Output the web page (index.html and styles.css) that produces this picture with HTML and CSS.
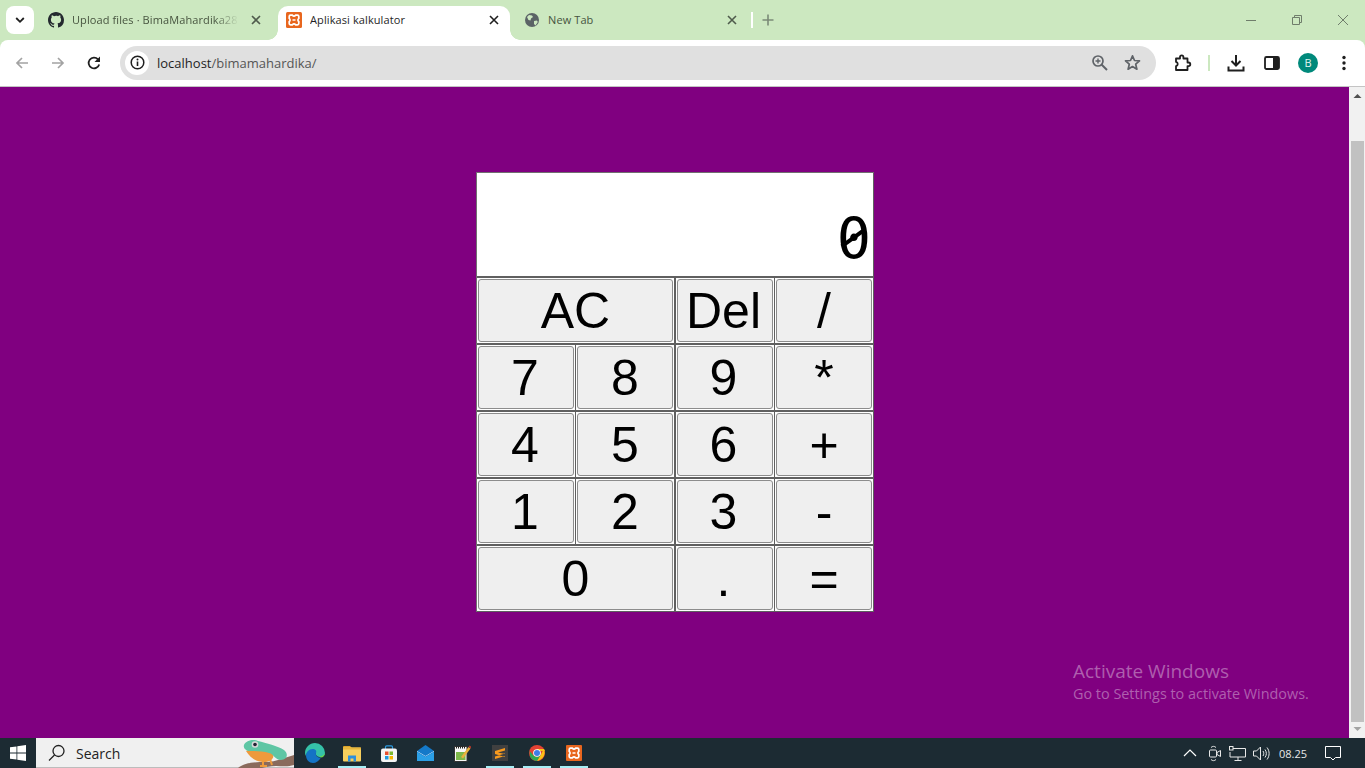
FILE: index.html
```html
<!DOCTYPE html>
<html lang="id">
<head>
<meta charset="utf-8">
<title>Aplikasi kalkulator</title>
<link rel="stylesheet" href="styles.css">
</head>
<body>
<div class="browser">
  <header class="tabstrip">
    <button class="tab-search"><svg width="12" height="12" viewBox="0 0 12 12"><path d="M2.2 4l3.8 3.8L9.8 4" fill="none" stroke="#1f1f1f" stroke-width="1.8"/></svg></button>
    <div class="tab tab-one">
      <svg class="fav" width="16" height="16" viewBox="0 0 16 16"><path fill="#24292f" d="M8 0C3.58 0 0 3.58 0 8c0 3.54 2.29 6.53 5.47 7.59.4.07.55-.17.55-.38v-1.34c-2.23.48-2.7-1.07-2.7-1.07-.36-.93-.89-1.17-.89-1.17-.73-.5.05-.49.05-.49.8.06 1.23.82 1.23.82.71 1.22 1.87.87 2.33.66.07-.52.28-.87.51-1.07-1.78-.2-3.64-.89-3.64-3.95 0-.87.31-1.59.82-2.15-.08-.2-.36-1.02.08-2.12 0 0 .67-.21 2.2.82A7.7 7.7 0 0 1 8 3.87c.68 0 1.36.09 2 .27 1.53-1.04 2.2-.82 2.2-.82.44 1.1.16 1.92.08 2.12.51.56.82 1.27.82 2.15 0 3.07-1.87 3.75-3.65 3.95.29.25.54.73.54 1.48v2.2c0 .21.15.46.55.38A8 8 0 0 0 16 8c0-4.42-3.58-8-8-8z"/></svg>
      <span class="tab-title fade">Upload files · BimaMahardika28</span>
      <svg class="x" width="10" height="10" viewBox="0 0 10 10"><path d="M1 1l8 8M9 1l-8 8" stroke="#4f5b4c" stroke-width="1.6"/></svg>
    </div>
    <div class="tab tab-active">
      <svg class="fav" width="16" height="16" viewBox="0 0 16 16"><rect width="16" height="16" rx="1.5" fill="#e8661e"/><path d="M4.500 3.200H6.300Q8 5 9.700 3.200H11.500Q12.800 3.200 12.800 4.500V6.300Q11 8 12.800 9.700V11.500Q12.800 12.800 11.500 12.800H9.700Q8 11 6.300 12.800H4.500Q3.200 12.800 3.200 11.500V9.700Q5 8 3.200 6.300V4.500Q3.200 3.200 4.500 3.200zM6.500 8h3" fill="none" stroke="#fff" stroke-width="1.700"/></svg>
      <span class="tab-title">Aplikasi kalkulator</span>
      <svg class="x" width="10" height="10" viewBox="0 0 10 10"><path d="M1 1l8 8M9 1l-8 8" stroke="#1f1f1f" stroke-width="1.6"/></svg>
    </div>
    <div class="tab tab-three">
      <svg class="fav" width="14" height="14" viewBox="0 0 14 14"><circle cx="7" cy="7" r="7" fill="#5b6366"/><path d="M2 4l2-2 3 .5 1 1.500-2 1.500-.5 2L3.500 7zM9 8l3 -.5.8 1.500L10.500 12.500 9 11z" fill="#cce8c0"/></svg>
      <span class="tab-title">New Tab</span>
      <svg class="x" width="10" height="10" viewBox="0 0 10 10"><path d="M1 1l8 8M9 1l-8 8" stroke="#4f5b4c" stroke-width="1.6"/></svg>
    </div>
    <span class="tab-sep"></span>
    <svg class="newtab" width="12" height="12" viewBox="0 0 12 12"><path d="M6 .5v11M.5 6h11" stroke="#7b8a77" stroke-width="1.6"/></svg>
    <div class="window-controls">
      <svg width="12" height="12" viewBox="0 0 12 12"><path d="M1 6.500h10" stroke="#6f7d6b"/></svg>
      <svg width="12" height="12" viewBox="0 0 12 12"><path d="M1.500 3.500h7v7h-7zM3.500 3.500v-2h7v7h-2" fill="none" stroke="#6f7d6b"/></svg>
      <svg width="12" height="12" viewBox="0 0 12 12"><path d="M1 1l10 10M11 1L1 11" stroke="#6f7d6b"/></svg>
    </div>
  </header>

  <nav class="toolbar">
    <svg class="nav-ic" width="16" height="16" viewBox="0 0 16 16"><path d="M14 8H3M8 3L3 8l5 5" fill="none" stroke="#a3a3a3" stroke-width="1.700"/></svg>
    <svg class="nav-ic" width="16" height="16" viewBox="0 0 16 16"><path d="M2 8h11M8 3l5 5-5 5" fill="none" stroke="#a3a3a3" stroke-width="1.700"/></svg>
    <svg class="nav-ic" width="16" height="16" viewBox="0 0 16 16"><path d="M13.200 9.500A5.400 5.400 0 1 1 12 4.300" fill="none" stroke="#1f1f1f" stroke-width="1.800"/><path d="M14 1.500V7H8.500z" fill="#1f1f1f"/></svg>
    <div class="omnibox">
      <span class="info"><svg width="15" height="15" viewBox="0 0 15 15"><circle cx="7.500" cy="7.500" r="6.300" fill="none" stroke="#1f1f1f" stroke-width="1.500"/><path d="M7.500 6.500v4.500" stroke="#1f1f1f" stroke-width="1.600"/><circle cx="7.500" cy="4.500" r="1" fill="#1f1f1f"/></svg></span>
      <span class="url"><span class="host">localhost</span><span class="path">/bimamahardika/</span></span>
      <svg class="omni-zoom" width="17" height="17" viewBox="0 0 17 17"><circle cx="7" cy="7" r="5" fill="none" stroke="#5f6368" stroke-width="1.700"/><path d="M10.500 10.500L16 16" stroke="#5f6368" stroke-width="2"/><path d="M7 4.500v5M4.500 7h5" stroke="#5f6368" stroke-width="1.400"/></svg>
      <svg class="omni-star" width="17" height="17" viewBox="0 0 17 17"><path d="M8.500 1.800l2 4.700 5 .4-3.800 3.300 1.200 5-4.400-2.700-4.400 2.700 1.200-5L1.500 6.900l5-.4z" fill="none" stroke="#5f6368" stroke-width="1.700" stroke-linejoin="round"/></svg>
    </div>
    <svg class="tool ext" width="18" height="18" viewBox="0 0 18 18"><path d="M2 4.500h4V3a1.700 1.700 0 0 1 3.400 0v1.500h4.100v4h1a1.800 1.800 0 0 1 0 3.600h-1V16H2v-3.800a2.200 2.200 0 0 0 0-4.300z" fill="none" stroke="#1f1f1f" stroke-width="1.800" stroke-linejoin="round"/></svg>
    <span class="tool-sep"></span>
    <svg class="tool dl" width="18" height="18" viewBox="0 0 18 18"><path d="M9 1v10M4.500 7L9 11.500 13.500 7" fill="none" stroke="#1f1f1f" stroke-width="2"/><path d="M1.500 12.500V16.500h15v-4" fill="none" stroke="#1f1f1f" stroke-width="2"/></svg>
    <svg class="tool side" width="16" height="16" viewBox="0 0 16 16"><rect x="1" y="2" width="14" height="12" rx="1.500" fill="none" stroke="#1f1f1f" stroke-width="1.800"/><rect x="9" y="2" width="6" height="12" fill="#1f1f1f"/></svg>
    <span class="avatar">B</span>
    <svg class="tool menu" width="6" height="16" viewBox="0 0 6 16"><circle cx="3" cy="2.500" r="1.700" fill="#1f1f1f"/><circle cx="3" cy="8" r="1.700" fill="#1f1f1f"/><circle cx="3" cy="13.500" r="1.700" fill="#1f1f1f"/></svg>
  </nav>

  <div class="viewport">
    <main class="page">
      <div class="calc">
        <div class="cell display"><span class="readout">0</span></div>
        <div class="cell wide"><button class="key">AC</button></div><div class="cell third"><button class="key">Del</button></div><div class="cell"><button class="key">/</button></div>
        <div class="cell first"><button class="key">7</button></div><div class="cell"><button class="key">8</button></div><div class="cell third"><button class="key">9</button></div><div class="cell"><button class="key">*</button></div>
        <div class="cell first"><button class="key">4</button></div><div class="cell"><button class="key">5</button></div><div class="cell third"><button class="key">6</button></div><div class="cell"><button class="key">+</button></div>
        <div class="cell first"><button class="key">1</button></div><div class="cell"><button class="key">2</button></div><div class="cell third"><button class="key">3</button></div><div class="cell"><button class="key">-</button></div>
        <div class="cell wide last"><button class="key">0</button></div><div class="cell third last"><button class="key">.</button></div><div class="cell last"><button class="key">=</button></div>
      </div>
      <div class="activate">
        <div class="act-title">Activate Windows</div>
        <div class="act-sub">Go to Settings to activate Windows.</div>
      </div>
    </main>
    <aside class="scrollbar">
      <svg width="15" height="14" viewBox="0 0 15 14"><path d="M3.500 11l4-4 4 4z" fill="#505050"/></svg>
      <div class="thumb"></div>
      <svg width="15" height="14" viewBox="0 0 15 14"><path d="M3.500 3l4 4 4-4z" fill="#a3a3a3"/></svg>
    </aside>
  </div>
</div>

<footer class="taskbar">
  <div class="start"><svg width="16" height="16" viewBox="0 0 16 16"><path fill="#fff" d="M0 2.300l6.500-.9v6.200H0zM7.300 1.300L16 0v7.600H7.300zM0 8.400h6.500v6.200L0 13.700zM7.300 8.400H16V16l-8.700-1.300z"/></svg></div>
  <div class="searchbox">
    <svg width="18" height="18" viewBox="0 0 18 18"><circle cx="10.500" cy="7" r="5.500" fill="none" stroke="#222" stroke-width="1.300"/><path d="M6.500 11L1 16.500" stroke="#222" stroke-width="1.300"/></svg>
    <span class="search-label">Search</span>
    <svg class="frog" width="56" height="30" viewBox="0 0 56 30"><path d="M0 30C6 25 16 24 28 24c10 0 20-5 28-7v10c-6 2-12 1-18 1-6 0-10 1-14 2z" fill="#8a6a5c"/><path d="M8 13c6-3 18-3 26 2 3 3 1 8-6 9-8 1-15-3-20-11z" fill="#ee9a3c"/><path d="M6 7C8 2 16 1 20 3c8 2 20 5 26 9 5 4 3 10-3 10-6 0-7-6-12-7-6-2-14-2-19-2-4 0-7-3-6-6z" fill="#5ec6a4"/><circle cx="17" cy="6.500" r="3.300" fill="#d8d8d8"/><circle cx="17" cy="6.500" r="1.800" fill="#223"/><path d="M25 22v6M22 28h7M32 21l2 6" stroke="#ee9a3c" stroke-width="2"/></svg>
  </div>
  <div class="apps">
    <span class="app"><svg width="20" height="20" viewBox="0 0 20 20"><path d="M10 0a10 10 0 0 1 10 10c0 3-3 4.500-5.500 4-3-.5-4-2-3.500-4C11 7 6 6 3 9 1.500 10.500 1 12 1 13 .3 11.800 0 11 0 10 0 4.500 4.500 0 10 0z" fill="#35c1a8"/><path d="M1 13c0-4 3-7 6.500-7 3 0 4.500 2 3.500 4-.8 3 2 5 5 4.500-1.800 3.500-5 5.500-8 5.500-4 0-6.500-3-7-7z" fill="#1473c5"/><path d="M16 14.500c2 0 4-2 4-4.500-1 2-3 3.500-6 3.500z" fill="#68d64f"/></svg></span>
    <span class="app running"><svg width="20" height="18" viewBox="0 0 20 18"><path d="M1 3a1 1 0 0 1 1-1h6l2 2H1z" fill="#d9a22a"/><rect x="1" y="3.500" width="18" height="14" rx="1" fill="#f7cf5d"/><rect x="1" y="3.500" width="18" height="2" fill="#e6b53c"/><path d="M6 17.500v-6h8v6h-2.500v-3h-3v3z" fill="#2e8fdc"/></svg></span>
    <span class="app"><svg width="16" height="17" viewBox="0 0 16 17"><path d="M4.500 4V2a1.200 1.200 0 0 1 1.200-1.200h4.600A1.200 1.200 0 0 1 11.500 2v2" fill="none" stroke="#2c9be0" stroke-width="1.200"/><rect y="3.500" width="16" height="13.500" rx="2" fill="#f5f5f5"/><rect x="4" y="6.500" width="3.500" height="3.500" fill="#e8502f"/><rect x="8.500" y="6.500" width="3.500" height="3.500" fill="#7cb82f"/><rect x="4" y="11" width="3.500" height="3.500" fill="#1f9ae0"/><rect x="8.500" y="11" width="3.500" height="3.500" fill="#f7b500"/></svg></span>
    <span class="app"><svg width="17" height="16" viewBox="0 0 17 16"><path d="M0 6l8.500-6L17 6v10H0z" fill="#1479c9"/><path d="M0 6l8.500 5L17 6v.5l-8.500 5L0 6.500z" fill="#fff"/><path d="M0 7l8.500 5L17 7v9H0z" fill="#2b9fe6"/></svg></span>
    <span class="app"><svg width="17" height="17" viewBox="0 0 17 17"><rect x=".5" y="1.500" width="12.500" height="15" fill="#f7f7f7" stroke="#333"/><rect x="2" y="7" width="9.500" height="8" fill="#7cb84a"/><path d="M2 2.500h10" stroke="#222" stroke-dasharray="1 1" stroke-width="2"/><path d="M7 12L14.500 2l2 1.500L9 13.500z" fill="#e8b23c"/><path d="M14.500 2l1-1.500 2 1.300-1 1.700z" fill="#b5362a"/></svg></span>
    <span class="app running"><span class="sublime"><svg width="12" height="13" viewBox="0 0 12 13"><path d="M11 1L1 4v3l10 3V7L4 5.500l7-2zM1 9.500l10-3V9L1 12z" fill="#f79a1e"/></svg></span></span>
    <span class="app running"><svg width="16" height="16" viewBox="0 0 48 48"><circle cx="24" cy="24" r="24" fill="#e34133"/><path d="M24 48L36 28 44.500 12c5 9 4 30-20.500 36z" fill="#fbc116"/><path d="M24 48C13 48 6 41 3 34l-1-16 12 14 10 4 12-8z" fill="#30a853"/><path d="M24 12H45C46 14 47 16 47.500 18H24z" fill="#fbc116"/><circle cx="24" cy="24" r="11.500" fill="#fff"/><circle cx="24" cy="24" r="9" fill="#3e7de8"/></svg></span>
    <span class="app running"><svg width="16" height="16" viewBox="0 0 16 16"><rect width="16" height="16" rx="1" fill="#e8661e"/><path d="M4.500 3.200H6.300Q8 5 9.700 3.200H11.500Q12.800 3.200 12.800 4.500V6.300Q11 8 12.800 9.700V11.500Q12.800 12.800 11.500 12.800H9.700Q8 11 6.300 12.800H4.500Q3.200 12.800 3.200 11.500V9.700Q5 8 3.200 6.300V4.500Q3.200 3.200 4.500 3.200zM6.500 8h3" fill="none" stroke="#fff" stroke-width="1.700"/></svg></span>
  </div>
  <div class="tray">
    <svg class="tray-chev" width="14" height="8" viewBox="0 0 14 8"><path d="M1 7l6-6 6 6" fill="none" stroke="#fff" stroke-width="1.200"/></svg>
    <svg class="tray-meet" width="12" height="17" viewBox="0 0 12 17"><rect x=".5" y="5" width="7" height="7" rx="1" fill="none" stroke="#e8e8e8"/><path d="M8 7.500l3.500-2v6L8 9.500zM2 2.500C3.500 1 5.500 1 7 2.500M2 14.500c1.500 1.500 3.500 1.500 5 0" fill="none" stroke="#e8e8e8"/></svg>
    <svg class="tray-net" width="17" height="15" viewBox="0 0 17 15"><path d="M4 2.500h12.500v8.500H1V6M9 11v3M5.500 14.500h7" fill="none" stroke="#e8e8e8"/><rect x=".5" y=".5" width="3.500" height="3.500" fill="none" stroke="#e8e8e8"/></svg>
    <svg class="tray-vol" width="17" height="15" viewBox="0 0 17 15"><path d="M.5 5v5h3l4 4V1l-4 4zM10 5c1 1.500 1 3.500 0 5M12 3.500c1.800 2.500 1.800 5.500 0 8M14 1.500c2.800 3.500 2.800 8.500 0 12" fill="none" stroke="#e8e8e8"/></svg>
    <span class="clock">08.25</span>
    <svg class="tray-note" width="16" height="15" viewBox="0 0 16 15"><path d="M.5.500h15v11h-5L8 14l-2.500-2.500h-5z" fill="none" stroke="#fff"/></svg>
  </div>
</footer>
</body>
</html>
```
FILE: styles.css
```css
* { box-sizing: border-box; }
html, body { margin: 0; padding: 0; height: 100%; overflow: hidden; }
body {
  width: 1365px; height: 768px;
  display: flex; flex-direction: column;
  font-family: "Open Sans", "Noto Sans", sans-serif;
  background: #800080;
}
svg { display: block; flex: none; }
.browser { flex: 1; display: flex; flex-direction: column; min-height: 0; background: #cce8c0; }

/* tab strip */
.tabstrip {
  height: 40px; flex: none;
  background: #cce8c0;
  display: flex; align-items: flex-end;
  position: relative;
  padding-left: 6px;
}
.tab-search {
  width: 28px; height: 28px; margin-bottom: 6px; margin-right: 2px;
  border: 0; border-radius: 8px; background: #fff; padding: 0;
  display: flex; align-items: center; justify-content: center;
}
.tab {
  height: 34px;
  padding-bottom: 7px;
  display: flex; align-items: center;
  font-size: 11px; letter-spacing: .1px;
  color: #47543f;
  position: relative;
}
.tab-one { width: 242px; padding-left: 12px; }
.tab-active {
  width: 232px; padding-left: 8px;
  background: #fff; border-radius: 10px 10px 0 0;
  color: #1f1f1f;
}
.tab-active::before, .tab-active::after {
  content: ""; position: absolute; bottom: 0; width: 10px; height: 10px;
}
.tab-active::before { left: -10px; background: radial-gradient(circle at 0 0, #cce8c0 9.500px, #fff 10px); }
.tab-active::after { right: -10px; background: radial-gradient(circle at 100% 0, #cce8c0 9.500px, #fff 10px); }
.tab-three { width: 240px; padding-left: 15px; }
.tab-title { flex: 1; white-space: nowrap; overflow: hidden; margin-left: 8px; }
.tab-three .tab-title { margin-left: 9px; }
.fade {
  flex: none; width: 167px;
  -webkit-mask-image: linear-gradient(90deg, #000 85%, transparent 100%);
  mask-image: linear-gradient(90deg, #000 85%, transparent 100%);
}
.tab .x { margin-right: 11px; }
.tab-one .x { margin-left: 12px; }
.tab-three .x { margin-right: 13px; }
.tab-sep { width: 2px; height: 16px; background: #fff; margin: 0 0 12px 1px; }
.newtab { margin: 0 0 14px 9px; }
.window-controls {
  margin-left: auto; height: 40px;
  display: flex; align-items: center; gap: 34px;
  padding: 0 16px 0 0;
}

/* toolbar */
.toolbar {
  height: 47px; flex: none;
  background: #fff;
  border-radius: 8px 8px 0 0;
  border-bottom: 1px solid #c4c4c4;
  display: flex; align-items: center;
  padding: 0 0 1px 14px;
}
.nav-ic { margin-right: 20px; }
.omnibox {
  width: 1036px; height: 34px;
  margin-left: -2px;
  background: #e0e0e0; border-radius: 17px;
  display: flex; align-items: center;
  padding-left: 5px;
}
.info {
  width: 24px; height: 24px; border-radius: 50%; background: #fff;
  display: flex; align-items: center; justify-content: center;
}
.url { margin-left: 8px; font-size: 13px; flex: 1; }
.host { color: #1f1f1f; }
.path { color: #555; }
.omni-zoom { margin-right: 16px; }
.omni-star { margin-right: 15px; }
.ext { margin-left: 18px; }
.tool-sep { width: 2px; height: 16px; background: #cce8c0; margin-left: 16px; }
.dl { margin-left: 17px; }
.side { margin-left: 19px; }
.avatar {
  width: 20px; height: 20px; border-radius: 50%;
  background: #00897b; color: #e4f5f2;
  font-size: 11px; line-height: 20px; text-align: center;
  margin-left: 18px;
}
.menu { margin-left: 23px; }

/* page */
.viewport { flex: 1; display: flex; min-height: 0; }
.page { flex: 1; background: #800080; padding: 85px 0 0 1px; position: relative; }
.calc {
  width: 398px; height: 440px;
  margin: 0 auto;
  display: grid;
  grid-template-columns: 99px 99px 100px 99px;
  grid-template-rows: 105px 67px 67px 67px 67px 66px;
  background: #fff;
  outline: 0;
  border-top: 1px solid #707070;
  border-left: 1px solid #707070;
}
.cell {
  border-right: 1px solid #606060;
  border-bottom: 2px solid #606060;
  padding: 1px;
  min-width: 0;
}
.wide { grid-column: span 2; }
.third { border-left: 1px solid #606060; }
.last { border-bottom-width: 1px; }
.display {
  grid-column: 1 / -1;
  padding: 0 2px 8px 0;
  display: flex; justify-content: flex-end; align-items: flex-end;
}
.readout {
  display: block;
  position: relative;
  font-family: "DejaVu Sans Mono", "Liberation Mono", monospace;
  font-size: 57px; line-height: 57px;
  color: #000;
}
.readout::after {
  content: ""; position: absolute;
  left: 2px; right: 4px; top: 50%; height: 4px; margin-top: -4px;
  background: #000;
  transform: rotate(-36deg);
}
.key {
  display: block; width: 100%; height: 63px;
  margin: 0;
  background: #efefef;
  border: 1px solid #8c8c8c;
  border-radius: 3px;
  padding: 0;
  font-family: "Liberation Sans", Arial, sans-serif;
  font-size: 50px; line-height: 1;
  color: #000;
}
.first .key { padding-right: 2px; }
.third .key { padding-right: 3px; }
.activate { position: absolute; left: 1073px; top: 572px; color: rgba(255,255,255,.38); }
.act-title { font-size: 19px; line-height: 25px; }
.act-sub { font-size: 14.400px; line-height: 20px; }

.scrollbar {
  width: 16px; flex: none; background: #f1f1f1;
  padding-left: 1px;
  display: flex; flex-direction: column; align-items: center;
}
.scrollbar svg { flex: none; }
.thumb { width: 13px; flex: 1; background: #c1c1c1; margin: 40px 0 2px; }

/* taskbar */
.taskbar {
  height: 30px; flex: none;
  background: #1c2b33;
  display: flex; align-items: center;
  color: #fff;
}
.start { width: 36px; display: flex; justify-content: center; padding-left: 0; }
.searchbox {
  width: 258px; height: 30px;
  background: #f0f0f0;
  border-bottom: 1px solid #bcbcbc;
  display: flex; align-items: center;
  padding-left: 12px;
  position: relative;
}
.search-label { color: #222; font-size: 14px; margin: 1px 0 0 10px; }
.frog { position: absolute; right: 0; top: 0; }
.apps { display: flex; margin-left: 2px; height: 30px; }
.app {
  width: 37px; height: 30px;
  display: flex; align-items: center; justify-content: center;
  border-bottom: 2px solid transparent;
  padding-top: 2px;
}
.running { position: relative; }
.running::after {
  content: ""; position: absolute; left: 4.500px; right: 4.500px; bottom: -2px; height: 2px;
  background: #a6eef5;
}
.sublime {
  width: 16px; height: 16px; background: #404040;
  display: flex; align-items: center; justify-content: center;
}
.tray { margin-left: auto; display: flex; align-items: center; height: 30px; }
.tray-chev { margin-right: 12px; }
.tray-meet { margin-right: 8px; }
.tray-net { margin-right: 7px; }
.tray-vol { margin-right: 9px; }
.clock { font-size: 11px; color: #e8e8e8; margin-right: 18px; }
.tray-note { margin-right: 24px; }
```
